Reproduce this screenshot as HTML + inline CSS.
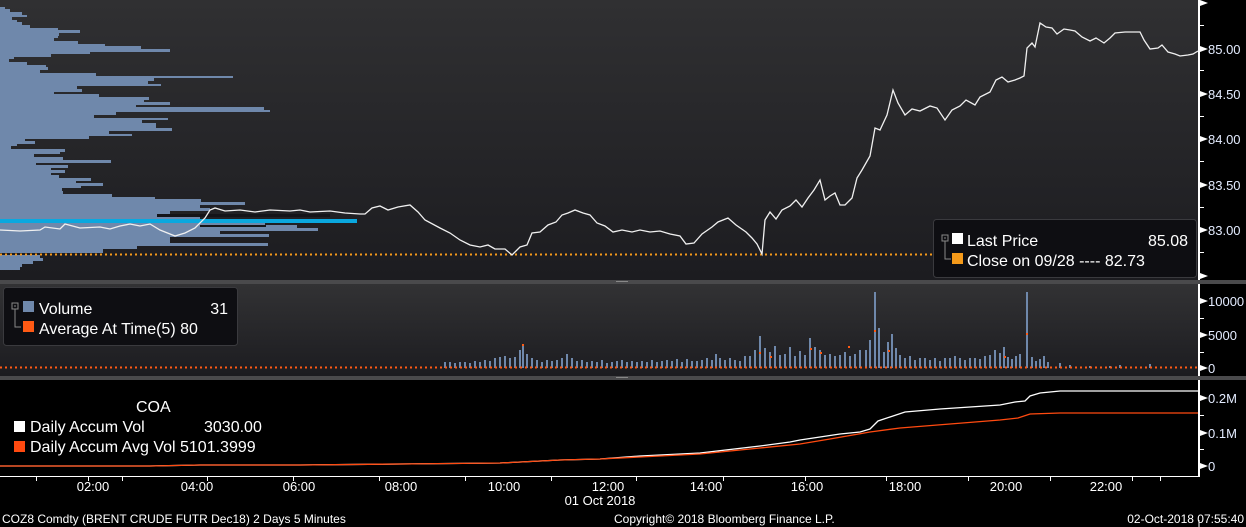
<!DOCTYPE html>
<html><head><meta charset="utf-8"><style>
body{margin:0;width:1246px;height:527px;background:#000;overflow:hidden;font-family:"Liberation Sans",sans-serif;}
svg{display:block}
text{font-family:"Liberation Sans",sans-serif;}
</style></head><body>
<svg width="1246" height="527" viewBox="0 0 1246 527">
<defs>
<linearGradient id="g1" x1="0" y1="0" x2="0" y2="1"><stop offset="0" stop-color="#303032"/><stop offset="1" stop-color="#1c1c20"/></linearGradient>
<linearGradient id="g2" x1="0" y1="0" x2="0" y2="1"><stop offset="0" stop-color="#323234"/><stop offset="1" stop-color="#1c1c20"/></linearGradient>
</defs>
<rect x="0" y="0" width="1246" height="527" fill="#000"/>
<rect x="0" y="0" width="1198" height="280" fill="url(#g1)"/>
<rect x="0" y="284" width="1198" height="92" fill="url(#g2)"/>
<rect x="0" y="280" width="1246" height="4" fill="#4a4a4c"/>
<rect x="0" y="376" width="1246" height="4" fill="#4a4a4c"/>
<rect x="616" y="281" width="12" height="1" fill="#888"/>
<rect x="616" y="377" width="12" height="1" fill="#888"/>
<!-- volume profile -->
<g fill="#6f88ab">
<rect x="0" y="7" width="5" height="2"/><rect x="0" y="9" width="10" height="3"/><rect x="0" y="12" width="22" height="3"/><rect x="0" y="15" width="27" height="2"/><rect x="0" y="17" width="12" height="3"/><rect x="0" y="20" width="17" height="2"/><rect x="0" y="22" width="22" height="3"/><rect x="0" y="25" width="30" height="3"/><rect x="0" y="28" width="58" height="2"/><rect x="0" y="30" width="80" height="3"/><rect x="0" y="33" width="59" height="3"/><rect x="0" y="36" width="58" height="2"/><rect x="0" y="38" width="54" height="3"/><rect x="0" y="41" width="78" height="3"/><rect x="0" y="44" width="105" height="2"/><rect x="0" y="46" width="141" height="3"/><rect x="0" y="49" width="170" height="3"/><rect x="0" y="52" width="90" height="2"/><rect x="0" y="54" width="51" height="3"/><rect x="0" y="57" width="14" height="2"/><rect x="0" y="59" width="9" height="3"/><rect x="0" y="62" width="27" height="3"/><rect x="0" y="65" width="46" height="2"/><rect x="0" y="67" width="48" height="3"/><rect x="0" y="70" width="40" height="3"/><rect x="0" y="73" width="96" height="3"/><rect x="0" y="76" width="233" height="2"/><rect x="0" y="78" width="154" height="3"/><rect x="0" y="81" width="148" height="3"/><rect x="0" y="84" width="161" height="2"/><rect x="0" y="86" width="77" height="3"/><rect x="0" y="89" width="82" height="3"/><rect x="0" y="92" width="54" height="2"/><rect x="0" y="94" width="99" height="3"/><rect x="0" y="97" width="149" height="3"/><rect x="0" y="100" width="144" height="2"/><rect x="0" y="102" width="170" height="3"/><rect x="0" y="105" width="136" height="2"/><rect x="0" y="107" width="264" height="3"/><rect x="0" y="110" width="270" height="2"/><rect x="0" y="112" width="116" height="3"/><rect x="0" y="115" width="94" height="3"/><rect x="0" y="118" width="168" height="2"/><rect x="0" y="120" width="142" height="3"/><rect x="0" y="123" width="156" height="5"/><rect x="0" y="128" width="172" height="3"/><rect x="0" y="131" width="109" height="3"/><rect x="0" y="134" width="132" height="2"/><rect x="0" y="136" width="89" height="3"/><rect x="0" y="139" width="25" height="2"/><rect x="0" y="141" width="35" height="3"/><rect x="0" y="144" width="17" height="2"/><rect x="0" y="146" width="11" height="3"/><rect x="0" y="149" width="65" height="3"/><rect x="0" y="152" width="60" height="2"/><rect x="0" y="154" width="34" height="3"/><rect x="0" y="157" width="63" height="3"/><rect x="0" y="160" width="111" height="3"/><rect x="0" y="163" width="36" height="2"/><rect x="0" y="165" width="68" height="3"/><rect x="0" y="168" width="51" height="2"/><rect x="0" y="170" width="65" height="3"/><rect x="0" y="173" width="51" height="2"/><rect x="0" y="175" width="59" height="3"/><rect x="0" y="178" width="91" height="3"/><rect x="0" y="181" width="76" height="2"/><rect x="0" y="183" width="103" height="3"/><rect x="0" y="186" width="81" height="2"/><rect x="0" y="188" width="62" height="3"/><rect x="0" y="191" width="63" height="3"/><rect x="0" y="194" width="112" height="3"/><rect x="0" y="197" width="155" height="2"/><rect x="0" y="199" width="201" height="3"/><rect x="0" y="202" width="245" height="3"/><rect x="0" y="205" width="200" height="3"/><rect x="0" y="208" width="210" height="3"/><rect x="0" y="211" width="170" height="3"/><rect x="0" y="214" width="330" height="3"/><rect x="0" y="217" width="200" height="3"/><rect x="0" y="222" width="265" height="3"/><rect x="0" y="225" width="297" height="3"/><rect x="0" y="228" width="318" height="3"/><rect x="0" y="231" width="220" height="3"/><rect x="0" y="234" width="269" height="3"/><rect x="0" y="237" width="170" height="3"/><rect x="0" y="240" width="170" height="3"/><rect x="0" y="243" width="268" height="3"/><rect x="0" y="246" width="137" height="3"/><rect x="0" y="249" width="103" height="4"/><rect x="0" y="255" width="40" height="3"/><rect x="0" y="258" width="43" height="3"/><rect x="0" y="261" width="33" height="3"/><rect x="0" y="264" width="22" height="3"/><rect x="0" y="267" width="20" height="3"/>
</g>
<g fill="#141418">
<rect x="157" y="214" width="173" height="3"/><rect x="200" y="225" width="66" height="2"/><rect x="103" y="250" width="0" height="0"/>
</g>
<rect x="0" y="219" width="357" height="4" fill="#0aa8df"/>
<line x1="0" y1="254.5" x2="1198" y2="254.5" stroke="#f59a1a" stroke-width="2" stroke-dasharray="2,3"/>
<!-- price line -->
<polyline fill="none" stroke="#f0f0f0" stroke-width="1.3" points="0,230 20,231 40,230 45,227 60,229 65,224 80,228 100,227 110,229 120,226 130,224 140,226 150,224 160,230 170,234 175,236 185,233 195,228 205,218 210,210 215,208 225,211 240,210 255,212 270,210 290,211 300,210 310,212 330,211 345,213 360,214 365,214 372,208 380,206 388,210 398,207 410,205 418,212 425,220 440,228 450,233 460,240 470,245 480,247 488,245 495,249 505,249 512,255 520,247 527,245 532,233 540,232 548,225 556,222 562,215 568,213 575,210 583,213 590,215 597,223 605,226 613,232 622,230 632,232 640,230 650,232 660,231 670,234 680,236 686,244 694,243 702,234 712,227 718,222 728,218 736,225 746,232 752,238 757,244 762,254 765,220 770,212 776,219 782,210 790,206 796,200 802,207 808,198 814,190 820,180 825,200 830,196 835,193 840,205 845,205 852,198 857,178 862,170 870,156 875,128 880,130 887,115 893,90 898,103 905,115 912,109 920,111 930,106 937,108 945,120 952,110 960,106 966,100 975,105 980,97 990,92 996,80 1002,77 1008,82 1015,80 1020,78 1024,76 1027,48 1032,43 1035,47 1040,23 1046,27 1052,28 1057,34 1064,29 1070,30 1075,31 1082,37 1090,41 1096,38 1104,43 1110,38 1115,33 1125,32 1135,32 1140,32 1144,40 1150,49 1158,48 1162,45 1168,52 1175,54 1180,56 1188,55 1193,54 1198,51"/>
<!-- legend main -->
<rect x="933.5" y="219.5" width="263" height="58" rx="3" fill="#0e0e12" stroke="#3a3a3e"/>
<rect x="942" y="235" width="6" height="6" fill="none" stroke="#888"/><line x1="944" y1="238" x2="946" y2="238" stroke="#888"/>
<polyline points="945,241 945,259 951,259" fill="none" stroke="#888"/>
<rect x="952" y="233" width="11" height="11" fill="#fff"/>
<rect x="952" y="253" width="11" height="11" fill="#f59a1a"/>
<text x="967" y="246" fill="#fff" font-size="16">Last Price</text>
<text x="1188" y="246" fill="#fff" font-size="16" text-anchor="end">85.08</text>
<text x="967" y="266" fill="#fff" font-size="16">Close on 09/28 ---- 82.73</text>
<!-- volume bars -->
<path fill="none" stroke="#6f88ab" stroke-width="2" d="M445 368V362M450 368V362M455 368V363M460 368V362M465 368V362M470 368V363M475 368V361M480 368V362M485 368V360M490 368V361M495 368V358M500 368V357M505 368V356M510 368V358M515 368V357M520 368V350M523 368V346M527 368V354M532 368V358M537 368V360M542 368V362M547 368V360M552 368V361M557 368V360M562 368V358M567 368V354M572 368V358M577 368V361M582 368V360M587 368V362M592 368V361M597 368V362M602 368V360M607 368V363M612 368V362M617 368V361M622 368V360M627 368V362M632 368V361M637 368V362M642 368V361M647 368V362M652 368V360M657 368V362M662 368V361M667 368V360M672 368V361M677 368V359M682 368V362M687 368V359M692 368V361M697 368V361M702 368V360M707 368V358M712 368V360M716 368V354M720 368V358M725 368V360M730 368V358M735 368V360M740 368V361M745 368V356M750 368V356M755 368V350M760 368V336M765 368V348M770 368V352M775 368V346M780 368V355M785 368V354M790 368V347M795 368V356M800 368V351M805 368V355M810 368V338M815 368V347M820 368V350M825 368V355M830 368V354M835 368V356M840 368V355M845 368V352M850 368V356M855 368V354M860 368V350M866 368V350M870 368V340M875 368V292M879 368V328M884 368V352M888 368V342M892 368V334M896 368V348M900 368V355M905 368V358M910 368V356M915 368V360M920 368V358M925 368V358M930 368V360M935 368V358M940 368V361M945 368V358M950 368V358M955 368V356M960 368V358M965 368V360M970 368V358M975 368V358M980 368V359M985 368V356M990 368V355M995 368V350M1000 368V353M1004 368V347M1008 368V357M1012 368V359M1016 368V356M1020 368V354M1027 368V292M1032 368V357M1036 368V361M1040 368V359M1044 368V356M1048 368V362M1060 368V363M1070 368V365M1090 368V366M1110 368V366M1120 368V365M1150 368V364"/>
<path fill="none" stroke="#ff5a14" stroke-width="2" stroke-dasharray="2,3" d="M0 367.5H1198"/>
<g fill="#ff5a14"><rect x="522" y="344" width="2" height="2"/><rect x="759" y="352" width="2" height="2"/><rect x="810" y="348" width="2" height="2"/><rect x="820" y="352" width="2" height="2"/><rect x="848" y="346" width="2" height="2"/><rect x="874" y="330" width="2" height="2"/><rect x="888" y="350" width="2" height="2"/><rect x="1026" y="333" width="2" height="2"/><rect x="770" y="356" width="2" height="2"/><rect x="1004" y="356" width="2" height="2"/></g>
<!-- volume legend -->
<rect x="3.5" y="287.5" width="234" height="58" rx="3" fill="#0e0e12" stroke="#3a3a3e"/>
<rect x="12" y="303" width="6" height="6" fill="none" stroke="#888"/><line x1="14" y1="306" x2="16" y2="306" stroke="#888"/>
<polyline points="15,309 15,327 21,327" fill="none" stroke="#888"/>
<rect x="23" y="301" width="11" height="11" fill="#6f88ab"/>
<rect x="23" y="321" width="11" height="11" fill="#ff5a14"/>
<text x="39" y="314" fill="#fff" font-size="16">Volume</text>
<text x="228" y="314" fill="#fff" font-size="16" text-anchor="end">31</text>
<text x="39" y="334" fill="#fff" font-size="16">Average At Time(5) 80</text>
<!-- bottom panel -->
<polyline fill="none" stroke="#fff" stroke-width="1.3" points="0,466 150,466 200,465 300,465 400,464 500,463 560,460 600,459 640,456 700,453 760,446 790,442 800,440 820,437 840,434 860,432 870,429 878,421 890,417 905,412 940,409 1000,405 1015,402 1025,401 1030,396 1040,393 1060,391 1200,391"/>
<polyline fill="none" stroke="#ff4a10" stroke-width="1.3" points="0,466 150,466 200,465 300,465 400,464 500,463 560,460 600,459 640,457 700,454 760,448 800,444 830,439 870,432 900,428 950,424 1000,420 1018,418 1030,414 1060,413 1200,413"/>
<text x="136" y="412" fill="#fff" font-size="16">COA</text>
<rect x="14" y="421" width="11" height="11" fill="#fff"/>
<rect x="14" y="441" width="11" height="11" fill="#ff4a10"/>
<text x="30" y="432" fill="#fff" font-size="16">Daily Accum Vol</text>
<text x="204" y="432" fill="#fff" font-size="16">3030.00</text>
<text x="30" y="452" fill="#fff" font-size="16">Daily Accum Avg Vol 5101.3999</text>
<!-- right axis -->
<line x1="1199" y1="0" x2="1199" y2="280" stroke="#fff" stroke-width="2"/>
<line x1="1199" y1="284" x2="1199" y2="376" stroke="#fff" stroke-width="2"/>
<line x1="1199" y1="380" x2="1199" y2="477" stroke="#fff" stroke-width="2"/>
<line x1="1199" y1="520" x2="1199" y2="527" stroke="#fff" stroke-width="1"/>
<g fill="#fff">
<path d="M1200 0l8 3l-8 3z"/><path d="M1200 46l8 3l-8 3z"/><path d="M1200 91l8 3l-8 3z"/><path d="M1200 136l8 3l-8 3z"/><path d="M1200 182l8 3l-8 3z"/><path d="M1200 227l8 3l-8 3z"/><path d="M1200 273l8 3l-8 3z"/>
<path d="M1200 298l8 3l-8 3z"/><path d="M1200 332l8 3l-8 3z"/><path d="M1200 365l8 3l-8 3z"/>
<path d="M1200 395l8 3l-8 3z"/><path d="M1200 430l8 3l-8 3z"/><path d="M1200 463l8 3l-8 3z"/>
<rect x="1200" y="25" width="4" height="1"/><rect x="1200" y="70" width="4" height="1"/><rect x="1200" y="116" width="4" height="1"/><rect x="1200" y="161" width="4" height="1"/><rect x="1200" y="207" width="4" height="1"/><rect x="1200" y="252" width="4" height="1"/><rect x="1200" y="318" width="4" height="1"/><rect x="1200" y="352" width="4" height="1"/><rect x="1200" y="415" width="4" height="1"/><rect x="1200" y="449" width="4" height="1"/>
</g>
<g fill="#e4ecff" font-size="13">
<text x="1208" y="54">85.00</text><text x="1208" y="99">84.50</text><text x="1208" y="144">84.00</text><text x="1208" y="190">83.50</text><text x="1208" y="235">83.00</text>
<text x="1208" y="306">10000</text><text x="1208" y="340">5000</text><text x="1208" y="373">0</text>
<text x="1208" y="403">0.2M</text><text x="1208" y="438">0.1M</text><text x="1208" y="471">0</text>
</g>
<!-- x axis -->
<line x1="0" y1="476.5" x2="1199" y2="476.5" stroke="#fff"/>
<path stroke="#fff" d="M36.5 477v4M88.5 477v4M122.5 477v4M207.5 477v4M293.5 477v4M379.5 477v4M465.5 477v4M551.5 477v4M636.5 477v4M723.5 477v4M805.5 477v4M886.5 477v4M968.5 477v4M1050.5 477v4M1132.5 477v4M1160.5 477v4"/>
<g fill="#fff" font-size="13" text-anchor="middle">
<text x="93" y="491">02:00</text><text x="197" y="491">04:00</text><text x="299" y="491">06:00</text><text x="401" y="491">08:00</text><text x="504" y="491">10:00</text><text x="608" y="491">12:00</text><text x="706" y="491">14:00</text><text x="807" y="491">16:00</text><text x="905" y="491">18:00</text><text x="1006" y="491">20:00</text><text x="1106" y="491">22:00</text>
<text x="600" y="505">01 Oct 2018</text>
</g>
<g fill="#fff" font-size="12">
<text x="2" y="523">COZ8 Comdty (BRENT CRUDE FUTR  Dec18) 2 Days 5 Minutes</text>
<text x="614" y="523">Copyright© 2018 Bloomberg Finance L.P.</text>
<text x="1244" y="523" text-anchor="end">02-Oct-2018 07:55:40</text>
</g>
</svg>
</body></html>
